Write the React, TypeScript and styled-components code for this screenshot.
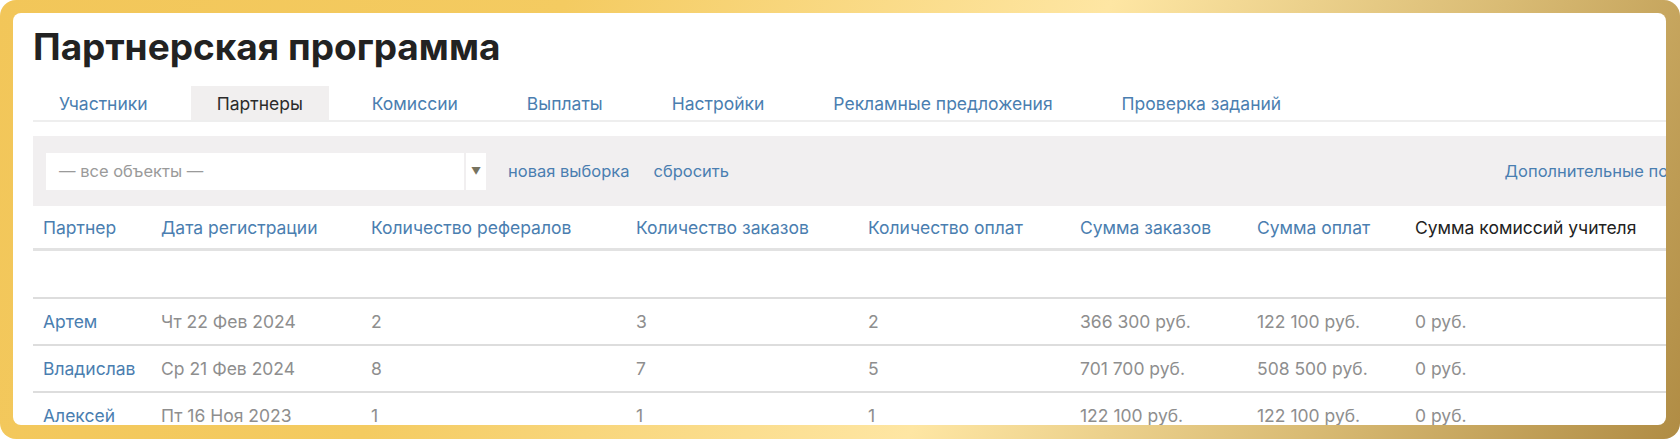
import React from 'react';
import styled, { createGlobalStyle } from 'styled-components';

interface Row {
  name: string;
  date: string;
  referrals: string;
  orders: string;
  payments: string;
  ordersSum: string;
  paymentsSum: string;
  commission: string;
}

const GlobalStyle = createGlobalStyle`
  html, body {
    margin: 0;
    padding: 0;
    background: #ffffff;
  }
  body {
    font-family: Inter, "Noto Sans", "Liberation Sans", sans-serif;
  }
  * {
    box-sizing: border-box;
  }
`;

const Frame = styled.div`
  width: 1680px;
  height: 439px;
  padding: 13px 14px 14px 13px;
  border-radius: 16px;
  background: linear-gradient(115deg, #f2c659 0%, #f4cb61 30%, #fee6a3 59%, #d9bb74 80%, #b08c44 100%);
`;

const Sheet = styled.div`
  height: 100%;
  background: #ffffff;
  border-radius: 8px;
  overflow: hidden;
  padding: 12px 0 0 20px;
`;

const Content = styled.div`
  width: 1720px;
`;

const Title = styled.h1`
  margin: 0;
  font-size: 37px;
  line-height: 44px;
  font-weight: 700;
  color: #222222;
`;

const Tabs = styled.div`
  display: flex;
  gap: 17px;
  margin-top: 17px;
  border-bottom: 2px solid #eeeeee;
`;

const Tab = styled.div<{ $active?: boolean }>`
  padding: 0 26px;
  height: 34px;
  line-height: 36px;
  font-size: 17.5px;
  color: ${(p) => (p.$active ? '#2b2b2b' : '#4a7eb0')};
  background: ${(p) => (p.$active ? '#f1efef' : 'transparent')};
  white-space: nowrap;
`;

const FilterBar = styled.div`
  display: flex;
  align-items: center;
  margin-top: 14px;
  height: 70px;
  padding: 0 13px;
  background: #f1eff0;
  font-size: 16.5px;
`;

const Select = styled.div`
  display: flex;
  gap: 2px;
  height: 37px;
`;

const SelectField = styled.div`
  width: 418px;
  background: #ffffff;
  padding-left: 13px;
  line-height: 37px;
  color: #9a9a9a;
`;

const SelectArrow = styled.div`
  width: 20px;
  background: #ffffff;
  display: flex;
  align-items: center;
  justify-content: center;
  color: #77735f;
  font-size: 10px;
`;

const BarLink = styled.a<{ $gap?: number; $push?: boolean }>`
  color: #4a7eb0;
  text-decoration: none;
  margin-left: ${(p) => (p.$push ? 'auto' : `${p.$gap ?? 22}px`)};
  white-space: nowrap;
`;

const TableRow = styled.div<{ $head?: boolean; $height: number }>`
  display: grid;
  grid-template-columns: 118px 210px 265px 232px 212px 177px 158px 1fr;
  align-items: center;
  height: ${(p) => p.$height}px;
  border-bottom: ${(p) => (p.$head ? '3px' : '2px')} solid ${(p) => (p.$head ? '#e2e2e2' : '#dddddd')};
  font-size: 17.5px;
`;

const Cell = styled.div<{ $tone?: 'link' | 'dark' | 'muted' }>`
  padding-left: 10px;
  white-space: nowrap;
  color: ${(p) => (p.$tone === 'link' ? '#4a7eb0' : p.$tone === 'dark' ? '#222222' : '#8e8e8e')};
`;

const tabs = ['Участники', 'Партнеры', 'Комиссии', 'Выплаты', 'Настройки', 'Рекламные предложения', 'Проверка заданий'];

const headers = [
  'Партнер',
  'Дата регистрации',
  'Количество рефералов',
  'Количество заказов',
  'Количество оплат',
  'Сумма заказов',
  'Сумма оплат',
  'Сумма комиссий учителя',
];

const rows: Row[] = [
  { name: 'Артем', date: 'Чт 22 Фев 2024', referrals: '2', orders: '3', payments: '2', ordersSum: '366 300 руб.', paymentsSum: '122 100 руб.', commission: '0 руб.' },
  { name: 'Владислав', date: 'Ср 21 Фев 2024', referrals: '8', orders: '7', payments: '5', ordersSum: '701 700 руб.', paymentsSum: '508 500 руб.', commission: '0 руб.' },
  { name: 'Алексей', date: 'Пт 16 Ноя 2023', referrals: '1', orders: '1', payments: '1', ordersSum: '122 100 руб.', paymentsSum: '122 100 руб.', commission: '0 руб.' },
];

const App = () => {
  return (
    <>
      <GlobalStyle />
      <Frame>
        <Sheet>
          <Content>
            <Title>Партнерская программа</Title>
            <Tabs>
              {tabs.map((t) => (
                <Tab key={t} $active={t === 'Партнеры'}>{t}</Tab>
              ))}
            </Tabs>
            <FilterBar>
              <Select>
                <SelectField>— все объекты —</SelectField>
                <SelectArrow>▼</SelectArrow>
              </Select>
              <BarLink href="#">новая выборка</BarLink>
              <BarLink href="#" $gap={24}>сбросить</BarLink>
              <BarLink href="#" $push>Дополнительные показатели</BarLink>
            </FilterBar>
            <TableRow $head $height={45}>
              {headers.map((h, i) => (
                <Cell key={h} $tone={i === headers.length - 1 ? 'dark' : 'link'}>{h}</Cell>
              ))}
            </TableRow>
            <TableRow $height={48} />
            {rows.map((r) => (
              <TableRow key={r.name} $height={47}>
                <Cell $tone="link">{r.name}</Cell>
                <Cell>{r.date}</Cell>
                <Cell>{r.referrals}</Cell>
                <Cell>{r.orders}</Cell>
                <Cell>{r.payments}</Cell>
                <Cell>{r.ordersSum}</Cell>
                <Cell>{r.paymentsSum}</Cell>
                <Cell>{r.commission}</Cell>
              </TableRow>
            ))}
          </Content>
        </Sheet>
      </Frame>
    </>
  );
};

export default App;
